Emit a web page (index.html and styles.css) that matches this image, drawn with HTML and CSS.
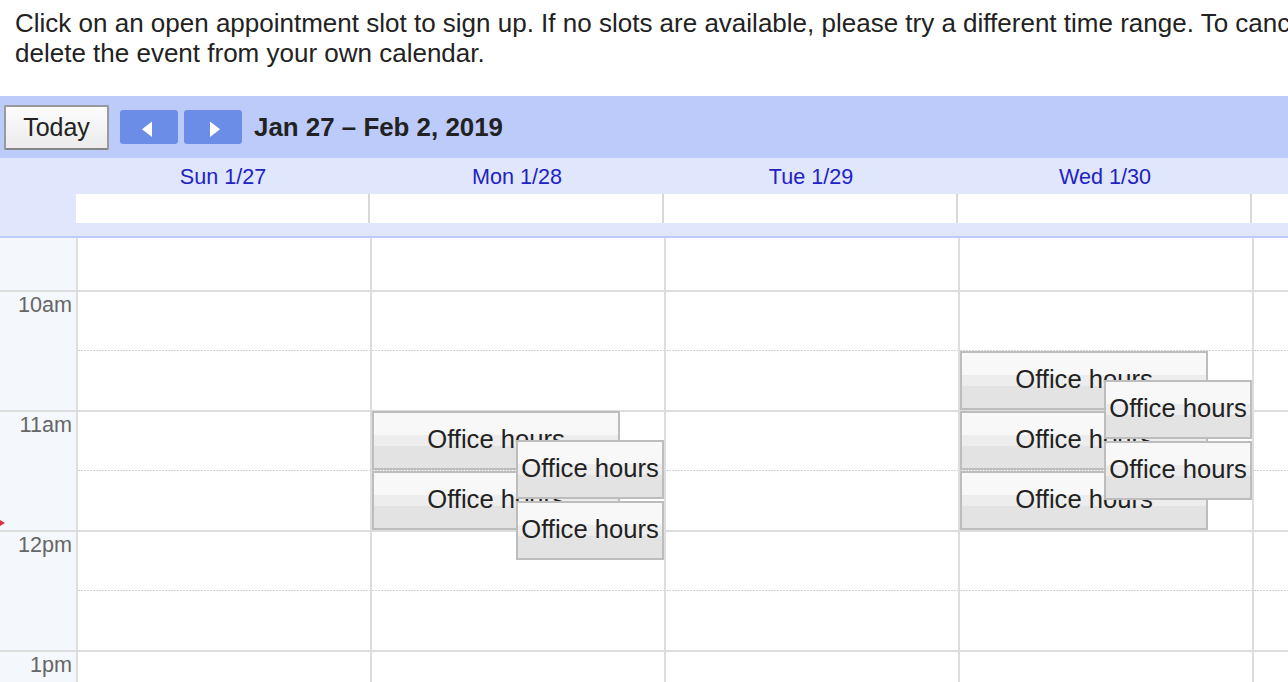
FILE: index.html
```html
<!DOCTYPE html>
<html>
<head>
<meta charset="utf-8">
<title>Appointment slots</title>
<link rel="stylesheet" href="styles.css">
</head>
<body>
<p class="intro">Click on an open appointment slot to sign up. If no slots are available, please try a different time range. To cancel, simply<br>delete the event from your own calendar.</p>

<div class="calendar">
  <div class="toolbar">
    <button class="today">Today</button>
    <div class="nav">
      <span class="navbtn"><svg width="58" height="34" viewBox="0 0 58 34"><polygon points="32,11.5 32,27 22,19.25" fill="#fff"/></svg></span>
      <span class="navbtn"><svg width="58" height="34" viewBox="0 0 58 34"><polygon points="26,11.5 26,27 36,19.25" fill="#fff"/></svg></span>
    </div>
    <div class="title">Jan 27 – Feb 2, 2019</div>
  </div>

  <div class="dayhead">
    <div class="gut"></div>
    <div class="dname">Sun 1/27</div>
    <div class="dname">Mon 1/28</div>
    <div class="dname">Tue 1/29</div>
    <div class="dname">Wed 1/30</div>
    <div class="dname">Thu 1/31</div>
    <div class="dname">Fri 2/1</div>
    <div class="dname">Sat 2/2</div>
  </div>
  <div class="allday">
    <div class="gut"></div>
    <div class="acell"></div><div class="acell"></div><div class="acell"></div><div class="acell"></div><div class="acell"></div><div class="acell"></div><div class="acell"></div>
  </div>
  <div class="strip"></div>

  <div class="scroller">
    <div class="grid">
      <div class="gutter">
        <div class="hour">9am</div>
        <div class="hour">10am</div>
        <div class="hour">11am</div>
        <div class="hour">12pm</div>
        <div class="hour">1pm</div>
        <div class="hour">2pm</div>
        <span class="now"></span>
      </div>
      <div class="day">
        <div class="hour"></div><div class="hour"></div><div class="hour"></div><div class="hour"></div><div class="hour"></div><div class="hour"></div>
      </div>
      <div class="day">
        <div class="hour"></div><div class="hour"></div><div class="hour"></div><div class="hour"></div><div class="hour"></div><div class="hour"></div>
        <div class="ev wide" style="top:241px">Office hours</div>
        <div class="ev wide" style="top:301px">Office hours</div>
        <div class="ev narrow" style="top:270px">Office hours</div>
        <div class="ev narrow" style="top:331px">Office hours</div>
      </div>
      <div class="day">
        <div class="hour"></div><div class="hour"></div><div class="hour"></div><div class="hour"></div><div class="hour"></div><div class="hour"></div>
      </div>
      <div class="day">
        <div class="hour"></div><div class="hour"></div><div class="hour"></div><div class="hour"></div><div class="hour"></div><div class="hour"></div>
        <div class="ev wide" style="top:181px">Office hours</div>
        <div class="ev wide" style="top:241px">Office hours</div>
        <div class="ev wide" style="top:301px">Office hours</div>
        <div class="ev narrow" style="top:210px">Office hours</div>
        <div class="ev narrow" style="top:271px">Office hours</div>
      </div>
      <div class="day">
        <div class="hour"></div><div class="hour"></div><div class="hour"></div><div class="hour"></div><div class="hour"></div><div class="hour"></div>
      </div>
      <div class="day">
        <div class="hour"></div><div class="hour"></div><div class="hour"></div><div class="hour"></div><div class="hour"></div><div class="hour"></div>
      </div>
      <div class="day">
        <div class="hour"></div><div class="hour"></div><div class="hour"></div><div class="hour"></div><div class="hour"></div><div class="hour"></div>
      </div>
    </div>
  </div>
</div>
</body>
</html>
```

FILE: styles.css
```css
html, body {
  margin: 0;
  padding: 0;
  overflow: hidden;
}
body {
  width: 1288px;
  height: 682px;
  background: #fff;
  color: #222;
  font-family: "Liberation Sans", Arial, Helvetica, sans-serif;
}
.intro {
  margin: 0;
  padding: 8px 0 0 15px;
  font-size: 26px;
  line-height: 30px;
  white-space: nowrap;
}
.calendar {
  width: 2134px;
  margin-top: 28px;
}
.toolbar {
  height: 62px;
  background: #bccbf9;
  display: flex;
  align-items: center;
  padding-left: 4px;
}
.today {
  box-sizing: border-box;
  width: 105px;
  height: 45px;
  border: 2px solid #9a9a9a;
  border-bottom-color: #868686;
  border-radius: 2px;
  background: linear-gradient(#fcfcfc, #ebebeb);
  font-family: "Liberation Sans", Arial, sans-serif;
  font-size: 25px;
  color: #222;
  padding: 0;
  display: flex;
  align-items: center;
  justify-content: center;
}
.nav {
  display: flex;
  gap: 6px;
  margin-left: 11px;
}
.navbtn {
  display: block;
  width: 58px;
  height: 34px;
  background: #6b8de8;
  border-radius: 3px;
}
.navbtn svg {
  display: block;
}
.title {
  margin-left: 12px;
  font-weight: bold;
  font-size: 25.9px;
  color: #222;
}
.dayhead {
  display: flex;
  height: 36px;
  background: #e0e7fc;
}
.gut {
  width: 76px;
  flex: none;
}
.dname {
  width: 294px;
  flex: none;
  box-sizing: border-box;
  padding-top: 1px;
  text-align: center;
  font-size: 21.6px;
  line-height: 35px;
  color: #2222c4;
}
.allday {
  display: flex;
  height: 29px;
  background: #e0e7fc;
}
.acell {
  width: 294px;
  flex: none;
  box-sizing: border-box;
  background: #fff;
  border-right: 2px solid #d9d9d9;
}
.strip {
  height: 13px;
  background: #e0e7fc;
  border-bottom: 2px solid #bccbf9;
}
.scroller {
  height: 444px;
  overflow: hidden;
}
.grid {
  display: flex;
  margin-top: -68px;
}
.gutter {
  width: 76px;
  flex: none;
  background: #f4f7fb;
  position: relative;
}
.hour {
  height: 120px;
  box-sizing: border-box;
  border-top: 2px solid #dddddd;
}
.gutter .hour {
  text-align: right;
  padding-right: 4px;
  font-size: 21.6px;
  color: #666;
}
.day {
  width: 294px;
  flex: none;
  box-sizing: border-box;
  border-left: 2px solid #dddddd;
  position: relative;
}
.day .hour {
  background-image: repeating-linear-gradient(90deg, #d2d2d2 0 2px, transparent 2px 3px);
  background-size: 100% 1px;
  background-position: 0 58px;
  background-repeat: no-repeat;
}
.now {
  position: absolute;
  left: 0;
  top: 350px;
  width: 0;
  height: 0;
  border-left: 5px solid #e03040;
  border-top: 3px solid transparent;
  border-bottom: 3px solid transparent;
}
.ev {
  position: absolute;
  box-sizing: border-box;
  height: 59px;
  border: 2px solid #bdbdbd;
  background: linear-gradient(#f8f8f8 0 40%, #ededed 40% 60%, #e3e3e3 60% 100%);
  font-size: 25.6px;
  color: #222;
  text-align: center;
  padding-top: 12px;
  white-space: nowrap;
  overflow: hidden;
}
.wide {
  left: 0;
  width: 248px;
}
.narrow {
  left: 144px;
  width: 148px;
}
```
